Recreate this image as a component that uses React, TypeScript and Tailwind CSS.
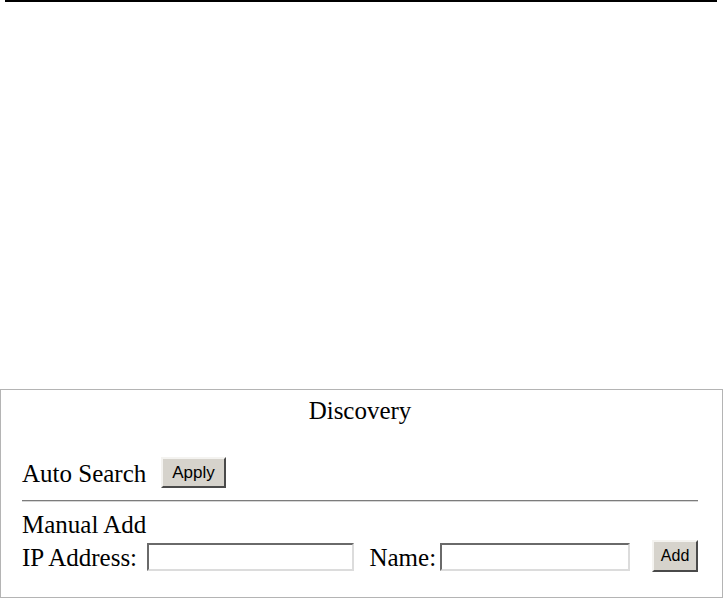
const serif = "font-['Liberation_Serif','Times_New_Roman',serif]";
const sans = "font-['Liberation_Sans',Arial,sans-serif]";

function WinButton({ label, className }: { label: string; className: string }) {
  return (
    <button
      type="button"
      className={`flex items-center justify-center border-2 border-t-[#f4f3f0] border-l-[#f4f3f0] border-r-[#4a4a4a] border-b-[#4a4a4a] bg-[#d6d3cc] text-black ${sans} ${className}`}
    >
      {label}
    </button>
  );
}

function TextBox({ className }: { className: string }) {
  return (
    <input
      type="text"
      className={`h-[28px] border-2 border-t-[#6a6a6a] border-l-[#6a6a6a] border-r-[#dcdcdc] border-b-[#dcdcdc] bg-white outline-none ${className}`}
    />
  );
}

export default function App() {
  return (
    <div className="min-h-[600px] w-[726px] bg-white text-black">
      <div className="ml-[5px] h-[2px] w-[712px] bg-black" />

      <div className={`mt-[387px] h-[209px] w-[723px] border border-[#b4b4b4] pl-[21px] pr-[24px] pt-[7px] text-[25px] leading-[28px] ${serif}`}>
        <div className="text-center">Discovery</div>

        <div className="mt-[32px] flex items-end">
          <span className="w-[139px]">Auto Search</span>
          <WinButton label="Apply" className="h-[31px] w-[65px] text-[17px]" />
        </div>

        <div className="mt-[12px] h-[2px] border-t border-t-[#7c7c7c] border-b border-b-[#d6d6d6]" />

        <div className="mt-[9px]">Manual Add</div>

        <div className="mt-[1px] flex items-end">
          <span className="w-[126px]">IP Address:</span>
          <TextBox className="mb-[1px] w-[207px]" />
          <span className="ml-[15px] w-[71px]">Name:</span>
          <TextBox className="mb-[1px] w-[190px]" />
          <WinButton label="Add" className="ml-[22px] h-[32px] w-[46px] text-[16px]" />
        </div>
      </div>
    </div>
  );
}
